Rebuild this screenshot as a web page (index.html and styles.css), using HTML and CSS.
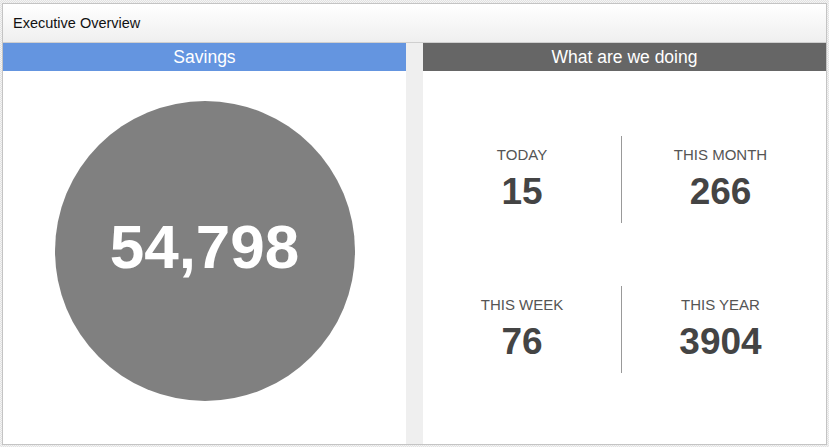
FILE: index.html
```html
<!DOCTYPE html>
<html lang="en">
<head>
    <meta charset="UTF-8" />
    <meta name="viewport" content="width=device-width, initial-scale=1.0" />
    <title>Executive Overview</title>
    <link rel="stylesheet" href="styles.css">
</head>
<body>
    <!-- Panneau principal -->
    <div class="panel">
        <div class="panel-header">Executive Overview</div>

        <div class="panel-body">
            <div class="column">
                <div class="column-title savings">Savings</div>
                <div class="savings-content">
                    <div class="circle">54,798</div>
                </div>
            </div>

            <div class="column">
                <div class="column-title doing">What are we doing</div>
                <div class="stats">
                    <div class="stat">
                        <div class="stat-label">TODAY</div>
                        <div class="stat-value">15</div>
                    </div>
                    <div class="stat stat-right">
                        <div class="stat-label">THIS MONTH</div>
                        <div class="stat-value">266</div>
                    </div>
                    <div class="stat">
                        <div class="stat-label">THIS WEEK</div>
                        <div class="stat-value">76</div>
                    </div>
                    <div class="stat stat-right">
                        <div class="stat-label">THIS YEAR</div>
                        <div class="stat-value">3904</div>
                    </div>
                </div>
            </div>
        </div>
    </div>
</body>
</html>
```

FILE: styles.css
```css
:root {
    --blue-color: #6495e0;
    --dark-color: #666666;
    --gap-color: #efefef;
    --border-color: #c4c4c4;
    --text-color: #444444;
}

* {
    box-sizing: border-box;
}

body {
    margin: 0;
    padding: 3px 2px 2px 2px;
    height: 447px;
    font-family: "Liberation Sans", Arial, sans-serif;
    background-color: #eeeeee;
    background-image: repeating-conic-gradient(#e2e2e2 0 25%, #f4f4f4 0 50%);
    background-size: 2px 2px;
}

.panel {
    height: 442px;
    border: 1px solid var(--border-color);
    background: white;
    display: flex;
    flex-direction: column;
}

.panel-header {
    height: 39px;
    padding-left: 10px;
    display: flex;
    align-items: center;
    font-size: 14.5px;
    color: #111;
    background: linear-gradient(to bottom, #ffffff 0%, #efefef 100%);
    border-bottom: 1px solid #cfcfcf;
}

.panel-body {
    flex: 1;
    display: flex;
    gap: 17px;
    background: var(--gap-color);
}

.column {
    flex: 1;
    background: white;
    display: flex;
    flex-direction: column;
}

.column-title {
    height: 28px;
    display: flex;
    align-items: center;
    justify-content: center;
    color: white;
    font-size: 17.5px;
}

.column-title.savings {
    background: var(--blue-color);
}

.column-title.doing {
    background: var(--dark-color);
}

.savings-content {
    display: flex;
    justify-content: center;
    padding-top: 30px;
}

.circle {
    width: 300px;
    height: 300px;
    padding-bottom: 10px;
    border-radius: 50%;
    background: #808080;
    color: white;
    font-size: 62px;
    font-weight: bold;
    display: flex;
    align-items: center;
    justify-content: center;
}

.stats {
    display: grid;
    grid-template-columns: 1fr 1fr;
    row-gap: 63px;
    padding: 65px 7px 0 0;
}

.stat {
    height: 87px;
    padding-top: 10px;
    text-align: center;
}

.stat-right {
    border-left: 1px solid #999;
}

.stat-label {
    font-size: 15px;
    line-height: 18px;
    color: #555;
}

.stat-value {
    margin-top: 6px;
    font-size: 37px;
    line-height: 44px;
    font-weight: bold;
    color: var(--text-color);
}
```
